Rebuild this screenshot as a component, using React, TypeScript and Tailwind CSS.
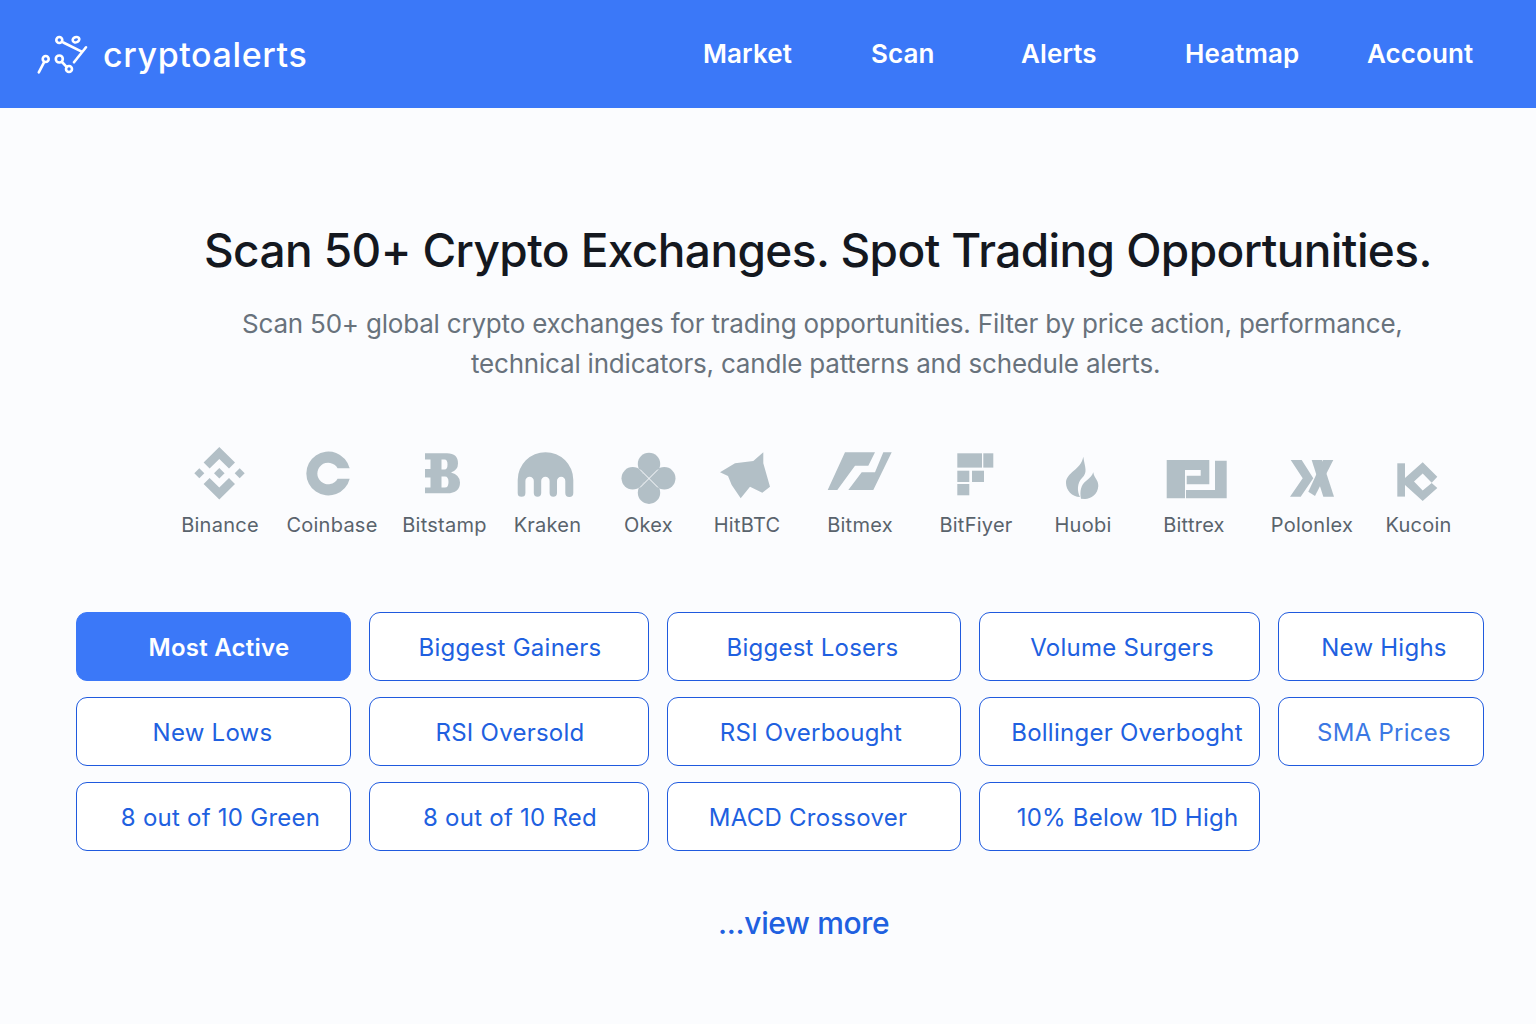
const navItems = [
  { label: "Market", className: "w-[168px]" },
  { label: "Scan", className: "w-[150px]" },
  { label: "Alerts", className: "w-[164px]" },
  { label: "Heatmap", className: "w-[182px]" },
  { label: "Account", className: "w-[108px]" },
];

function LogoMark() {
  return (
    <svg viewBox="34 22 56 46" className="w-[56px] h-[46px] shrink-0" fill="none" stroke="white" strokeWidth="2.6" strokeLinecap="round">
      <circle cx="59.3" cy="31" r="3" />
      <ellipse cx="76" cy="30.7" rx="3.4" ry="2.6" transform="rotate(-20 76 30.7)" />
      <path d="M63.3 33.5 81.7 42.7" />
      <path d="M86 38.3 74 53.3" />
      <circle cx="59.3" cy="50" r="3.5" />
      <path d="M62 53 66.6 57.8" />
      <circle cx="69" cy="60" r="3" />
      <circle cx="45.7" cy="50" r="3" />
      <path d="M44 53.3 38.8 63.3" />
    </svg>
  );
}

const exchanges = [
  {
    name: "Binance",
    className: "w-[100px]",
    viewBox: "170 445 100 60",
    icon: (
      <>
        <path d="M219.3 447 235 462.5 229 468.5 219.3 459 209.6 468.5 203.6 462.5Z" />
        <path d="M219.3 499.5 235 484 229 478 219.3 487.6 209.6 478 203.6 484Z" />
        <path d="M219.3 468 224.6 473.3 219.3 478.6 214 473.3Z" />
        <path d="M199.3 468.3 204.3 473.3 199.3 478.3 194.3 473.3Z" />
        <path d="M239.7 468.3 244.7 473.3 239.7 478.3 234.7 473.3Z" />
      </>
    ),
  },
  {
    name: "Coinbase",
    className: "w-[124px]",
    viewBox: "270 445 124 60",
    icon: <path d="M351.7 468.3H349.7A22 22 0 1 0 349.7 478.7H351.7V478.7H337.6A10.8 10.8 0 1 1 337.6 468.3H351.7Z" />,
  },
  {
    name: "Bitstamp",
    className: "w-[101px]",
    viewBox: "394 445 101 60",
    icon: (
      <path
        fillRule="evenodd"
        d="M425 453.3H447Q458 453.3 458 463.5 458 470 451 472.5 460 475 460 482.5 460 493.3 447 493.3H425V487.5H430.5V477.5H425V469H430.5V459.5H425ZM441.5 459.5V469.5H444.5Q447.5 469.5 447.5 464.5 447.5 459.5 444.5 459.5ZM441.5 476.5V487.5H445Q448.5 487.5 448.5 482 448.5 476.5 445 476.5Z"
      />
    ),
  },
  {
    name: "Kraken",
    className: "w-[105px]",
    viewBox: "495 445 105 60",
    icon: <path d="M517.7 480A27.8 27.8 0 0 1 573.3 480V493A4 4 0 0 1 565.3 493V481A4 4 0 0 0 557 481V493A3.7 3.7 0 0 1 549.6 493V481A4.2 4.2 0 0 0 541.2 481V493A3.7 3.7 0 0 1 533.8 493V481A4.2 4.2 0 0 0 525.4 481V493A3.85 3.85 0 0 1 517.7 493Z" />,
  },
  {
    name: "Okex",
    className: "w-[97px]",
    viewBox: "600 445 97 60",
    icon: (
      <>
        <circle cx="649" cy="464" r="11.2" />
        <circle cx="632.7" cy="478.3" r="11.2" />
        <circle cx="664.3" cy="478.3" r="11.2" />
        <circle cx="649" cy="492.7" r="11.2" />
        <path d="M649 468 659 478.3 649 488.5 639 478.3Z" />
        <path d="M640 469.5 658 487.5M658 469.5 640 487.5" stroke="#fbfcfe" strokeWidth="1" />
      </>
    ),
  },
  {
    name: "HitBTC",
    className: "w-[100px]",
    viewBox: "697 445 100 60",
    icon: <path d="M720 472.3 735 463.3 753.3 461 763.3 452.3 763.3 463.3 770 486.7 762.3 492.7 750 486.7 740.7 498.3 731.7 485 728 476Z" />,
  },
  {
    name: "Bitmex",
    className: "w-[126px]",
    viewBox: "797 445 126 60",
    icon: (
      <>
        <path d="M845 452.3H875L868.3 465.7H855L837.3 490H827.7Z" />
        <path d="M883.3 452.3H891.7L873.3 490H848.3L861.7 472.3H875Z" />
      </>
    ),
  },
  {
    name: "BitFiyer",
    className: "w-[106px]",
    viewBox: "923 445 106 60",
    icon: (
      <>
        <rect x="957.3" y="453.3" width="24.7" height="14.3" />
        <rect x="983.3" y="453.3" width="10" height="14.3" />
        <rect x="957.3" y="470.7" width="12" height="11.3" />
        <rect x="972" y="470.7" width="12" height="11.3" />
        <rect x="957.3" y="484" width="12" height="11.3" />
      </>
    ),
  },
  {
    name: "Huobi",
    className: "w-[108px]",
    viewBox: "1029 445 108 60",
    icon: (
      <>
        <path d="M1083.3 456.7C1085 468 1088 472 1082 478 1077 483 1077 491 1080 497 1072 497 1066 490 1066 483 1066 472 1081 470 1083.3 456.7Z" />
        <path d="M1093.3 472.3C1094 478 1098.5 480 1098.3 486 1098 494 1091 499 1085 499L1081 498.8C1079.5 491 1081 485 1086 481 1090 478 1092 476 1093.3 472.3Z" />
      </>
    ),
  },
  {
    name: "Bittrex",
    className: "w-[114px]",
    viewBox: "1137 445 114 60",
    icon: (
      <>
        <path d="M1166.7 460H1209.3V484.3H1186.7V475.7H1200.7V470H1185V498.3H1166.7Z" />
        <path d="M1215 460.7H1226.7V498.3H1186V490H1215Z" />
      </>
    ),
  },
  {
    name: "Polonlex",
    className: "w-[122px]",
    viewBox: "1251 445 122 60",
    icon: (
      <>
        <path d="M1290.7 460H1301.7L1313.3 478.3 1300.7 496.7H1290L1302.7 478.3Z" />
        <path d="M1311.7 460H1322L1334 496.7H1323.3Z" />
        <path d="M1323 460H1333.3L1315 496 1308.3 491.7Z" />
      </>
    ),
  },
  {
    name: "Kucoin",
    className: "w-[91px]",
    viewBox: "1373 445 91 60",
    icon: (
      <>
        <rect x="1397.3" y="463.3" width="7.7" height="33.3" />
        <path d="M1405 478 1422.7 462.3 1437.3 476.7 1431.7 482.7 1422.7 473.5 1414 481.5 1422.7 490.5 1431.7 483 1437.3 488 1422.7 501 1405 485Z" />
      </>
    ),
  },
];

const filters = [
  { label: "Most Active", textClass: "pl-[11px] text-white", active: true },
  { label: "Biggest Gainers", textClass: "pl-[2px] text-[#2060e0]" },
  { label: "Biggest Losers", textClass: "pr-[3px] text-[#2060e0]" },
  { label: "Volume Surgers", textClass: "pl-[5px] text-[#2060e0]" },
  { label: "New Highs", textClass: "pl-[6px] text-[#2060e0]" },
  { label: "New Lows", textClass: "pr-[2px] text-[#2060e0]" },
  { label: "RSI Oversold", textClass: "pl-[2px] text-[#2060e0]" },
  { label: "RSI Overbought", textClass: "pr-[6px] text-[#2060e0]" },
  { label: "Bollinger Overboght", textClass: "pl-[15px] text-[#2060e0]" },
  { label: "SMA Prices", textClass: "pl-[6px] text-[#3b78e4]" },
  { label: "8 out of 10 Green", textClass: "pl-[14px] text-[#2060e0]" },
  { label: "8 out of 10 Red", textClass: "pl-[2px] text-[#2060e0]" },
  { label: "MACD Crossover", textClass: "pr-[12px] text-[#2060e0]" },
  { label: "10% Below 1D High", textClass: "pl-[16px] text-[#2060e0]" },
];

export default function App() {
  return (
    <div className="min-h-screen bg-[#fbfcfe] font-['Inter',sans-serif] overflow-hidden">
      <header className="h-[108px] bg-[#3b78f8] flex items-center pl-[34px]">
        <LogoMark />
        <span className="ml-[13px] text-[34px] font-medium tracking-[0.6px] text-white">cryptoalerts</span>
        <nav className="ml-auto w-[833px] flex items-center pb-[2px]">
          {navItems.map((item) => (
            <a key={item.label} className={`${item.className} text-[26px] font-semibold tracking-[0.1px] text-white`}>
              {item.label}
            </a>
          ))}
        </nav>
      </header>

      <main>
        <h1 className="mt-[112px] ml-[204px] text-[46px] leading-[60px] font-medium tracking-[-0.6px] text-[#14181f] whitespace-nowrap">
          Scan 50+ Crypto Exchanges. Spot Trading Opportunities.
        </h1>
        <p className="mt-[24px] text-[26px] leading-[40px] tracking-[-0.2px] text-[#68727c] whitespace-nowrap">
          <span className="block ml-[242px]">Scan 50+ global crypto exchanges for trading opportunities. Filter by price action, performance,</span>
          <span className="block ml-[471px]">technical indicators, candle patterns and schedule alerts.</span>
        </p>

        <div className="mt-[61px] ml-[170px] flex">
          {exchanges.map((ex) => (
            <div key={ex.name} className={`${ex.className} flex flex-col items-center`}>
              <svg viewBox={ex.viewBox} className="w-full h-[60px] fill-[#b2bfc6]">
                {ex.icon}
              </svg>
              <span className="mt-[8px] text-[20px] leading-[24px] tracking-[0.25px] text-[#59636c]">{ex.name}</span>
            </div>
          ))}
        </div>

        <div className="mt-[75px] ml-[76px] w-[1408px] grid grid-cols-[275px_280px_294px_281px_206px] auto-rows-[69px] gap-x-[18px] gap-y-[16px]">
          {filters.map((f) => (
            <button
              key={f.label}
              className={`${f.textClass} pt-[2px] rounded-[11px] border flex items-center justify-center text-[24px] tracking-[0.25px] whitespace-nowrap ${
                f.active
                  ? "bg-[#3b78f8] border-[#3b78f8] font-semibold"
                  : "bg-white border-[#1f5ade]"
              }`}
            >
              {f.label}
            </button>
          ))}
        </div>

        <div className="mt-[50px] ml-[718px] text-[30px] leading-[44px] font-medium tracking-[-0.35px] text-[#2060e0]">...view more</div>
      </main>
    </div>
  );
}
